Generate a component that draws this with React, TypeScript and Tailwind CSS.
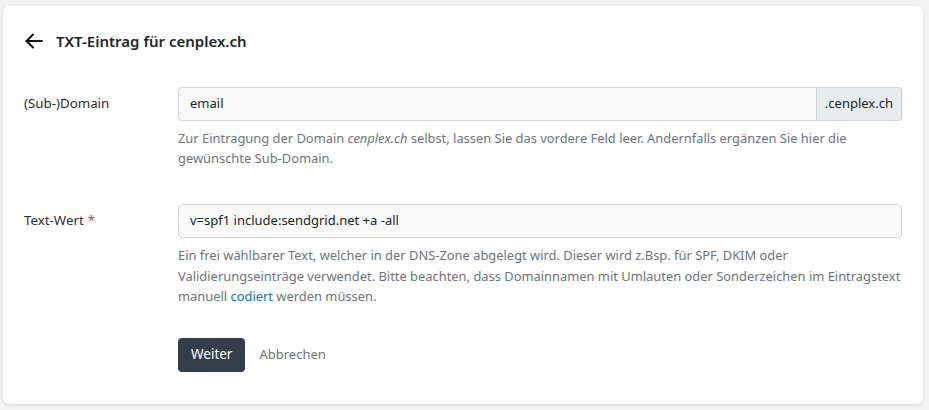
import React from "react";

function ArrowLeft() {
  return (
    <svg width="18" height="16" viewBox="0 0 18 16" fill="none" stroke="#111" strokeWidth="2" strokeLinecap="round" strokeLinejoin="round">
      <path d="M17 8H1.5" />
      <path d="M8 1.5L1.5 8 8 14.5" />
    </svg>
  );
}

export default function App() {
  return (
    <div className="min-h-[410px] w-[929px] bg-[#f3f3f3] pt-[6px] pl-[3px] pr-[6px] pb-[6px]" style={{ fontFamily: '"Noto Sans", "Open Sans", sans-serif' }}>
      <div className="w-[920px] rounded-[6px] bg-white shadow-[0_1px_3px_rgba(0,0,0,0.12)] px-[21px] pt-[24px] pb-[32px] text-[#212529]">
        <div className="flex h-[22px] items-center">
          <span className="flex w-[32px] items-center pl-[1px]"><ArrowLeft /></span>
          <h1 className="text-[15px] font-semibold leading-[22px] text-[#212529]">TXT-Eintrag für cenplex.ch</h1>
        </div>

        <div className="mt-[35px] grid grid-cols-[154px_1fr]">
          <div className="flex h-[34px] items-center text-[13.3px] text-[#2b2f33]">(Sub-)Domain</div>
          <div>
            <div className="flex h-[34px]">
              <div className="flex flex-1 items-center rounded-l-[4px] border border-[#ced4da] bg-[#fafafa] px-[11px] text-[13px]">email</div>
              <div className="flex items-center rounded-r-[4px] border border-l-0 border-[#ced4da] bg-[#e9ecef] px-[8px] text-[13px]">.cenplex.ch</div>
            </div>
            <p className="mt-[7px] whitespace-nowrap text-[12.9px] leading-[20px] text-[#6c757d]">
              Zur Eintragung der Domain <i>cenplex.ch</i> selbst, lassen Sie das vordere Feld leer. Andernfalls ergänzen Sie hier die
              <br />
              gewünschte Sub-Domain.
            </p>
          </div>
        </div>

        <div className="mt-[36px] grid grid-cols-[154px_1fr]">
          <div className="flex h-[34px] items-center text-[13.3px] text-[#2b2f33]">
            Text-Wert<span className="ml-[4px] text-[#dc3545]">*</span>
          </div>
          <div>
            <div className="flex h-[34px] items-center rounded-[4px] border border-[#ced4da] bg-[#fafafa] px-[11px] text-[13px]">v=spf1 include:sendgrid.net +a -all</div>
            <p className="mt-[7px] whitespace-nowrap text-[12.9px] leading-[20.5px] text-[#6c757d]">
              Ein frei wählbarer Text, welcher in der DNS-Zone abgelegt wird. Dieser wird z.Bsp. für SPF, DKIM oder
              <br />
              Validierungseinträge verwendet. Bitte beachten, dass Domainnamen mit Umlauten oder Sonderzeichen im Eintragstext
              <br />
              manuell <span className="text-[#1a6fb5]">codiert</span> werden müssen.
            </p>
            <div className="mt-[31px] flex items-center gap-[14px]">
              <button className="h-[34px] rounded-[4px] bg-[#343e4b] px-[13px] text-[13.5px] text-white">Weiter</button>
              <button className="text-[13px] text-[#6c757d]">Abbrechen</button>
            </div>
          </div>
        </div>
      </div>
    </div>
  );
}
